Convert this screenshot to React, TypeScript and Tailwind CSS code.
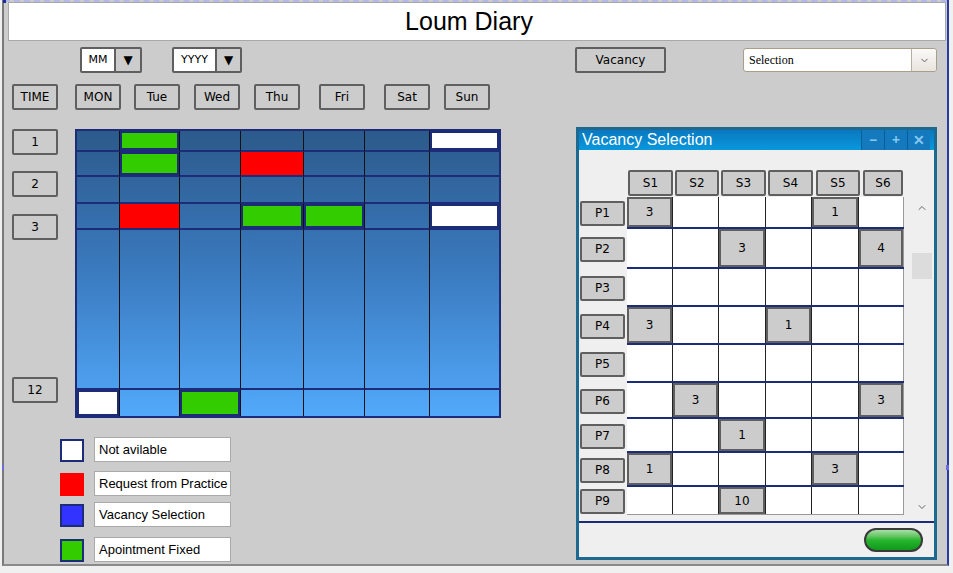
import { ChevronDown, ChevronUp } from "lucide-react";

const sketch = "font-['DejaVu_Sans',sans-serif]";
const arial = "font-['Liberation_Sans',Arial,sans-serif]";

type CellColor = "green" | "red" | "white";

// calendar grid (inner sizes incl. borders)
const calCols = [43, 60, 61, 63, 61, 65, 69];
const calRows = [21, 25, 27, 26, 160, 26];
const calCells: Record<string, CellColor> = {
  "0-1": "green",
  "1-1": "green",
  "1-3": "red",
  "0-6": "white",
  "3-1": "red",
  "3-3": "green",
  "3-4": "green",
  "3-6": "white",
  "5-0": "white",
  "5-2": "green",
};

const cellClass: Record<CellColor, string> = {
  green: "bg-[#33cc00] border-2 border-[#1c2c78]",
  red: "bg-[#ff0000]",
  white: "bg-white border-2 border-[#1c2c78]",
};

// vacancy selection grid
const vsCols = [46, 46, 47, 46, 47, 45];
const vsHeaders = [
  { label: "S1", ml: 1, w: 45 },
  { label: "S2", ml: 2, w: 44 },
  { label: "S3", ml: 2, w: 45 },
  { label: "S4", ml: 2, w: 45 },
  { label: "S5", ml: 3, w: 44 },
  { label: "S6", ml: 3, w: 40 },
];
const vsRows: { label: string; h: number; vals: Record<number, string> }[] = [
  { label: "P1", h: 32, vals: { 0: "3", 4: "1" } },
  { label: "P2", h: 40, vals: { 2: "3", 5: "4" } },
  { label: "P3", h: 38, vals: {} },
  { label: "P4", h: 38, vals: { 0: "3", 3: "1" } },
  { label: "P5", h: 38, vals: {} },
  { label: "P6", h: 36, vals: { 1: "3", 5: "3" } },
  { label: "P7", h: 34, vals: { 2: "1" } },
  { label: "P8", h: 34, vals: { 0: "1", 4: "3" } },
  { label: "P9", h: 28, vals: { 2: "10" } },
];

const legend = [
  { label: "Not avilable", box: "bg-white border-2 border-[#1c2c78]", mt: 0 },
  { label: "Request from Practice", box: "bg-[#ff0000]", mt: 9 },
  { label: "Vacancy Selection", box: "bg-[#3333ff] border-2 border-[#1c2c78]", mt: 6 },
  { label: "Apointment Fixed", box: "bg-[#33cc00] border-2 border-[#1c2c78]", mt: 10 },
];

const days = [
  { label: "MON", ml: 17 },
  { label: "Tue", ml: 13 },
  { label: "Wed", ml: 14 },
  { label: "Thu", ml: 14 },
  { label: "Fri", ml: 19 },
  { label: "Sat", ml: 19 },
  { label: "Sun", ml: 14 },
];

function SketchBtn({ label, className = "" }: { label: string; className?: string }) {
  return (
    <div
      className={`flex items-center justify-center border-2 border-[#5f5f5f] bg-[#cccccc] rounded-[2px] text-[12px] text-black ${sketch} ${className}`}
    >
      {label}
    </div>
  );
}

function SketchSelect({ label, w, split }: { label: string; w: number; split: number }) {
  return (
    <div
      className={`flex h-[26px] border-2 border-[#5f5f5f] rounded-[2px] bg-[#cccccc] ${sketch}`}
      style={{ width: w }}
    >
      <div className="flex items-center justify-center bg-white text-[11px] border-r-2 border-[#5f5f5f]" style={{ width: split }}>
        {label}
      </div>
      <div className="flex flex-1 items-center justify-center text-[12px]">▼</div>
    </div>
  );
}

function Calendar() {
  return (
    <div className="ml-[17px] w-[426px] h-[289px] border-2 border-[#1c2c78] bg-linear-to-b from-[#2c5a8b] via-[#3b7bc0] to-[#52a9fb]">
      {calRows.map((rh, r) => (
        <div key={r} className="flex" style={{ height: rh }}>
          {calCols.map((cw, c) => {
            const color = calCells[`${r}-${c}`];
            const lastRow = r === calRows.length - 1;
            const lastCol = c === calCols.length - 1;
            return (
              <div
                key={c}
                className={`${lastRow ? "" : "border-b-2 border-b-[#1c2c78]"} ${lastCol ? "" : "border-r border-r-[#111]"}`}
                style={{ width: cw }}
              >
                {color && <div className={`h-full w-full ${cellClass[color]}`} />}
              </div>
            );
          })}
        </div>
      ))}
    </div>
  );
}

function VacancyWindow() {
  return (
    <div className="ml-[75px] w-[361px] h-[433px] border-[3px] border-[#1d6990] bg-[#efefef] flex flex-col">
      {/* title bar */}
      <div className="h-[20px] flex items-center bg-linear-to-b from-[#0a78c0] to-[#0998dd]">
        <span className={`pl-[3px] text-[16px] text-white ${arial}`}>Vacancy Selection</span>
        <div className="ml-auto mr-[4px] flex h-full">
          {["−", "+", "✕"].map((g) => (
            <div
              key={g}
              className="w-[23px] h-full flex items-center justify-center border-l border-[#0a5f98] bg-[#1479bd] text-[#86c8f0] text-[14px] font-bold leading-none"
            >
              {g}
            </div>
          ))}
        </div>
      </div>

      {/* header */}
      <div className="mt-[20px] h-[26px] flex pl-[48px]">
        {vsHeaders.map((h) => (
          <div key={h.label} style={{ marginLeft: h.ml, width: h.w }}>
            <SketchBtn label={h.label} className="h-[26px]" />
          </div>
        ))}
      </div>

      {/* grid + scrollbar */}
      <div className="mt-[1px] flex">
        <div className="flex flex-col">
          {vsRows.map((row, r) => {
            const last = r === vsRows.length - 1;
            return (
              <div key={row.label} className="flex" style={{ height: row.h }}>
                <div className="w-[48px] flex items-center pl-[1px]">
                  <SketchBtn label={row.label} className="w-[45px] h-[25px]" />
                </div>
                <div className={`flex bg-white ${last ? "border-b border-b-[#999]" : "border-b-2 border-b-[#1c2c78]"}`}>
                  {vsCols.map((cw, c) => {
                    const v = row.vals[c];
                    return (
                      <div
                        key={c}
                        className={`h-full ${c === vsCols.length - 1 ? "border-r border-r-[#999]" : "border-r border-r-[#222]"}`}
                        style={{ width: cw }}
                      >
                        {v && (
                          <div className={`h-full w-full flex items-center justify-center bg-[#cccccc] border-2 border-[#5f5f5f] text-[12px] ${sketch}`}>
                            {v}
                          </div>
                        )}
                      </div>
                    );
                  })}
                </div>
              </div>
            );
          })}
        </div>
        <div className="w-[29px] flex flex-col items-center pl-[6px] pt-[5px] pb-[2px]">
          <ChevronUp size={12} color="#666" strokeWidth={2} />
          <div className="mt-[39px] w-[20px] h-[26px] bg-[#dcdcdc]" />
          <ChevronDown size={12} color="#666" strokeWidth={2} className="mt-auto" />
        </div>
      </div>

      {/* footer */}
      <div className="mt-[6px] border-t-2 border-[#1c2c78] flex-1 flex items-center justify-end pr-[11px]">
        <div className="w-[59px] h-[24px] rounded-full border-2 border-[#3a3a3a] bg-linear-to-b from-[#a6e0a6] via-[#27b52f] to-[#0d9a1a]" />
      </div>
    </div>
  );
}

export default function App() {
  return (
    <div className="w-[953px] h-[573px] overflow-hidden bg-[#f0f0f0] relative">
      <div className="ml-[2px] w-[947px] h-[566px] bg-[#cccccc] border-l-2 border-l-[#7a7a7a] border-b-2 border-b-[#8a8a8a] border-r-2 border-r-[#2a3aa8] flex flex-col">
        {/* selection outline at top */}
        <div className="h-[2px] border-t-2 border-dashed border-[#b4b8e8]" />

        {/* title */}
        <div className="ml-[4px] w-[938px] h-[39px] bg-white border border-[#a8a8a8] flex items-center justify-center pr-[16px]">
          <span className={`text-[25px] text-black ${arial}`}>Loum Diary</span>
        </div>

        {/* selectors */}
        <div className="mt-[6px] h-[26px] flex items-start">
          <div className="ml-[76px]">
            <SketchSelect label="MM" w={62} split={34} />
          </div>
          <div className="ml-[30px]">
            <SketchSelect label="YYYY" w={70} split={43} />
          </div>
          <SketchBtn label="Vacancy" className="ml-[333px] w-[91px] h-[26px]" />
          <div className="ml-[77px] mt-[1px] w-[194px] h-[24px] flex bg-white border border-[#a99d8c] rounded-[3px]">
            <div className="flex-1 flex items-center pl-[5px] text-[12px] font-['Liberation_Serif',serif] text-black">Selection</div>
            <div className="w-[25px] flex items-center justify-center border-l border-[#b8ae9f] bg-linear-to-b from-[#fbfaf8] to-[#e8e4de] rounded-r-[3px]">
              <ChevronDown size={11} color="#555" strokeWidth={2} />
            </div>
          </div>
        </div>

        {/* days */}
        <div className="mt-[11px] h-[26px] flex">
          <SketchBtn label="TIME" className="ml-[8px] w-[46px] h-[26px]" />
          {days.map((d) => (
            <div key={d.label} style={{ marginLeft: d.ml }}>
              <SketchBtn label={d.label} className="w-[46px] h-[26px]" />
            </div>
          ))}
        </div>

        {/* body */}
        <div className="mt-[17px] flex items-start">
          <div className="ml-[8px] mt-[2px] flex flex-col">
            <div className="flex">
              <div className="w-[46px] flex flex-col">
                <SketchBtn label="1" className="h-[26px]" />
                <SketchBtn label="2" className="mt-[16px] h-[26px]" />
                <SketchBtn label="3" className="mt-[17px] h-[26px]" />
                <SketchBtn label="12" className="mt-[137px] h-[26px]" />
              </div>
              <Calendar />
            </div>

            {/* legend */}
            <div className="mt-[19px] pl-[48px] flex flex-col">
              {legend.map((l) => (
                <div key={l.label} className="flex items-end" style={{ marginTop: l.mt }}>
                  <div className={`w-[24px] h-[23px] ${l.box}`} />
                  <div className={`ml-[10px] w-[137px] h-[25px] bg-white border border-[#aaaaaa] flex items-center pl-[4px] text-[13px] text-black ${arial}`}>
                    {l.label}
                  </div>
                </div>
              ))}
            </div>
          </div>

          <VacancyWindow />
        </div>
      </div>

      {/* selection handles */}
      <div className="absolute left-[3px] top-0 w-[3px] h-[3px] bg-[#1c2c98]" />
      <div className="absolute left-[2px] top-[465px] w-[2px] h-[5px] bg-[#6a6ae0]" />
      <div className="absolute left-[946px] top-[465px] w-[3px] h-[5px] bg-[#6a6ae0]" />
    </div>
  );
}
